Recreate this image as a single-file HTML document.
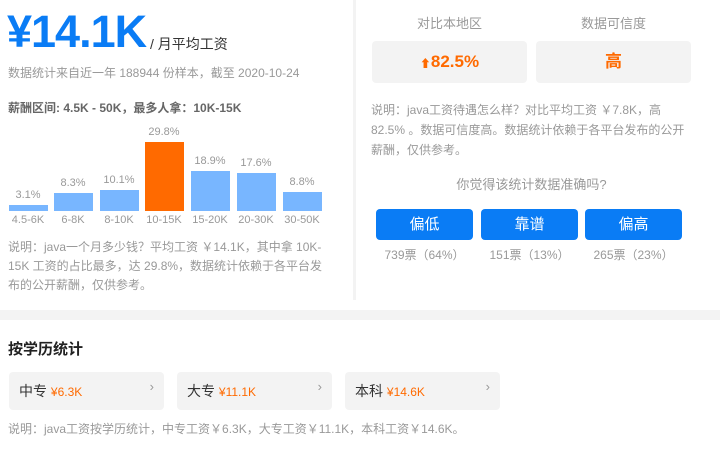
<!DOCTYPE html>
<html><head><meta charset="utf-8"><style>
*{margin:0;padding:0;box-sizing:border-box}
body{width:720px;height:449px;background:#fff;font-family:"Liberation Sans","Noto Sans CJK SC",sans-serif;position:relative;overflow:hidden;color:#999}
.a{position:absolute;white-space:nowrap}
.bar{position:absolute;width:39px;background:#78b6ff;bottom:238px}
.pl{position:absolute;width:46px;text-align:center;font-size:11px;color:#999}
.box{position:absolute;background:#f3f3f3;border-radius:4px}
.btn{position:absolute;top:209px;height:31px;width:97px;background:#0a7cf5;border-radius:4px;color:#fff;font-size:15px;text-align:center;line-height:31px}
.vote{position:absolute;top:246px;width:97px;text-align:center;font-size:12px;color:#999}
.card{position:absolute;top:372px;height:38px;width:155px;background:#f3f3f3;border-radius:4px;font-size:14px;color:#333;line-height:38px;padding-left:10px}
.card span{color:#ff6a00;font-size:12px}
.card i{position:absolute;right:10px;top:-4px;font-style:normal;color:#999;font-size:13px}
</style></head><body>
<div class="a" style="left:7px;top:6px;font-size:45px;font-weight:bold;color:#0a7cf5;letter-spacing:-1px">¥14.1K</div>
<div class="a" style="left:150px;top:34px;font-size:14px;color:#333">/ 月平均工资</div>
<div class="a" style="left:8px;top:64px;font-size:12px;color:#999">数据统计来自近一年 188944 份样本，截至 2020-10-24</div>
<div class="a" style="left:8px;top:99px;font-size:12px;font-weight:bold;color:#666">薪酬区间: 4.5K - 50K，最多人拿：10K-15K</div>

<div class="bar" style="left:9px;height:6px"></div>
<div class="bar" style="left:54px;height:18px"></div>
<div class="bar" style="left:100px;height:21px"></div>
<div class="bar" style="left:145px;height:69px;background:#ff6a00"></div>
<div class="bar" style="left:191px;height:40px"></div>
<div class="bar" style="left:237px;height:38px"></div>
<div class="bar" style="left:283px;height:19px"></div>
<div class="pl" style="left:5px;top:189px">3.1%</div>
<div class="pl" style="left:50px;top:177px">8.3%</div>
<div class="pl" style="left:96px;top:174px">10.1%</div>
<div class="pl" style="left:141px;top:126px">29.8%</div>
<div class="pl" style="left:187px;top:155px">18.9%</div>
<div class="pl" style="left:233px;top:157px">17.6%</div>
<div class="pl" style="left:279px;top:176px">8.8%</div>
<div class="pl" style="left:5px;top:214px">4.5-6K</div>
<div class="pl" style="left:50px;top:214px">6-8K</div>
<div class="pl" style="left:96px;top:214px">8-10K</div>
<div class="pl" style="left:141px;top:214px">10-15K</div>
<div class="pl" style="left:187px;top:214px">15-20K</div>
<div class="pl" style="left:233px;top:214px">20-30K</div>
<div class="pl" style="left:279px;top:214px">30-50K</div>
<div class="a" style="left:8px;top:238px;font-size:12px;line-height:19px;white-space:normal;width:325px">说明：java一个月多少钱？平均工资 ￥14.1K，其中拿 10K-15K 工资的占比最多，达 29.8%，数据统计依赖于各平台发布的公开薪酬，仅供参考。</div>

<div class="a" style="left:353px;top:0;width:3px;height:300px;background:#f3f3f3"></div>

<div class="a" style="left:372px;top:13px;width:155px;text-align:center;font-size:13px;color:#999">对比本地区</div>
<div class="a" style="left:536px;top:13px;width:155px;text-align:center;font-size:13px;color:#999">数据可信度</div>
<div class="box" style="left:372px;top:41px;width:155px;height:42px;text-align:center;line-height:42px;font-size:17px;font-weight:bold;color:#ff6a00"><span style="font-size:11px">⬆</span>82.5%</div>
<div class="box" style="left:536px;top:41px;width:155px;height:42px;text-align:center;line-height:42px;font-size:17px;font-weight:bold;color:#ff6a00">高</div>
<div class="a" style="left:371px;top:100px;font-size:12px;line-height:20px">说明：java工资待遇怎么样？对比平均工资 ￥7.8K，高<br>82.5% 。数据可信度高。数据统计依赖于各平台发布的公开<br>薪酬，仅供参考。</div>
<div class="a" style="left:372px;top:174px;width:319px;text-align:center;font-size:13px;color:#999">你觉得该统计数据准确吗?</div>
<div class="btn" style="left:376px">偏低</div>
<div class="btn" style="left:481px">靠谱</div>
<div class="btn" style="left:585px">偏高</div>
<div class="vote" style="left:376px">739票（64%）</div>
<div class="vote" style="left:481px">151票（13%）</div>
<div class="vote" style="left:585px">265票（23%）</div>

<div class="a" style="left:0;top:310px;width:720px;height:10px;background:#f3f3f3"></div>
<div class="a" style="left:8px;top:338px;font-size:15px;font-weight:bold;color:#222">按学历统计</div>
<div class="card" style="left:9px">中专 <span>¥6.3K</span><i>›</i></div>
<div class="card" style="left:177px">大专 <span>¥11.1K</span><i>›</i></div>
<div class="card" style="left:345px">本科 <span>¥14.6K</span><i>›</i></div>
<div class="a" style="left:8px;top:420px;font-size:12px;color:#999">说明：java工资按学历统计，中专工资￥6.3K，大专工资￥11.1K，本科工资￥14.6K。</div>
</body></html>
